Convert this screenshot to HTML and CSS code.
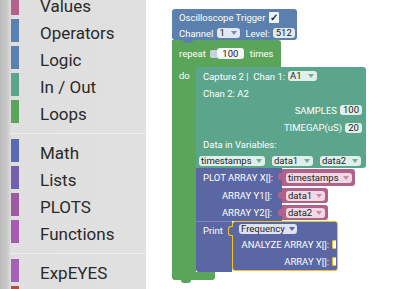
FILE: index.html
```html
<!DOCTYPE html>
<html>
<head>
<meta charset="utf-8">
<link rel="stylesheet" href="styles.css">
</head>
<body>
<div class="app">
  <nav class="toolbox">
    <div class="cats">
      <div class="cat"><span class="sw c-values"></span><span class="lbl">Values</span></div>
      <div class="cat"><span class="sw c-ops"></span><span class="lbl">Operators</span></div>
      <div class="cat"><span class="sw c-logic"></span><span class="lbl">Logic</span></div>
      <div class="cat"><span class="sw c-io"></span><span class="lbl">In / Out</span></div>
      <div class="cat"><span class="sw c-loops"></span><span class="lbl">Loops</span></div>
      <div class="sep"><span class="line"></span></div>
      <div class="cat"><span class="sw c-math"></span><span class="lbl">Math</span></div>
      <div class="cat"><span class="sw c-lists"></span><span class="lbl">Lists</span></div>
      <div class="cat"><span class="sw c-plots"></span><span class="lbl">PLOTS</span></div>
      <div class="cat"><span class="sw c-funcs"></span><span class="lbl">Functions</span></div>
      <div class="sep"><span class="line"></span></div>
      <div class="cat"><span class="sw c-exp"></span><span class="lbl">ExpEYES</span></div>
      <div class="cat"><span class="sw c-more"></span><span class="lbl"></span></div>
    </div>
  </nav>
  <main class="ws">
    <div class="stack">
      <div class="blk trigger">
        <div class="row t1">Oscilloscope Trigger<span class="chk">✓</span></div>
        <div class="row t2">Channel<span class="fld dd w-ch">1<i class="arr"></i></span>Level:<span class="fld w-lv">512</span></div>
      </div>
      <div class="repeat">
        <div class="rhead">repeat<span class="numtab"></span><span class="fld num">100</span>times</div>
        <div class="rmid">
          <div class="spine">do</div>
          <div class="stmts">
            <div class="blk capture">
              <div class="row c1">Capture 2 |&nbsp; Chan 1:<span class="fld dd w-a1">A1<i class="arr"></i></span></div>
              <div class="row c2">Chan 2: A2</div>
              <div class="row c3 end">SAMPLES<span class="fld w-sm">100</span></div>
              <div class="row c4 end">TIMEGAP(uS)<span class="fld w-tg">20</span></div>
              <div class="row c5">Data in Variables:</div>
              <div class="row c6">
                <span class="fld dd w-ts">timestamps<i class="arr"></i></span>
                <span class="fld dd w-d">data1<i class="arr"></i></span>
                <span class="fld dd w-d">data2<i class="arr"></i></span>
              </div>
            </div>
            <div class="plot">
              <div class="blk plot-body">
                <div class="row p1">PLOT ARRAY X[]:</div>
                <div class="row p2 end">ARRAY Y1[]:</div>
                <div class="row p3 end">ARRAY Y2[]:</div>
              </div>
              <div class="plot-ins">
                <div class="slot s1"><div class="val wide"><span class="fld dd">timestamps<i class="arr"></i></span></div></div>
                <div class="slot s2"><div class="val"><span class="fld dd">data1<i class="arr"></i></span></div></div>
                <div class="slot s3"><div class="val"><span class="fld dd">data2<i class="arr"></i></span></div></div>
              </div>
            </div>
            <div class="print">
              <div class="blk print-body">Print</div>
              <div class="blk fval">
                <div class="row f1"><span class="fld dd w-fr">Frequency<i class="arr"></i></span></div>
                <div class="row f2 end">ANALYZE ARRAY X[]:<span class="sock"></span></div>
                <div class="row f3 end">ARRAY Y[]:<span class="sock"></span></div>
              </div>
            </div>
          </div>
        </div>
        <div class="rfoot"></div>
      </div>
    </div>
  </main>
</div>
</body>
</html>
```

FILE: styles.css
```css
* { box-sizing: border-box; margin: 0; padding: 0; }
html, body { width: 413px; height: 289px; overflow: hidden; background: #fff; }
body { font-family: Roboto, "Liberation Sans", sans-serif; }

.app { display: flex; height: 289px; }

/* toolbox */
.toolbox {
  width: 146px; flex: none; overflow: hidden;
  background: linear-gradient(to right, #bcbcbc 0, #c8c8c8 7px, #dfdfdf 11px, #e0e0e0 100%);
}
.cats { margin-top: -8px; }
.cat { display: flex; align-items: flex-start; height: 23px; margin-bottom: 4px; }
.sw { width: 8px; height: 23px; margin-left: 11px; flex: none; }
.lbl { margin-left: 21px; font-size: 17px; line-height: 23px; padding-top: 3px; color: #2a2a2a; white-space: nowrap; }
.sep { height: 12px; display: flex; align-items: center; }
.sep .line { height: 1px; flex: 1; margin-left: 10px; background: #ededed; }

.c-values { background: #b4608c; }
.c-ops { background: #5b80b2; }
.c-logic { background: #5b80b2; }
.c-io { background: #5ba58c; }
.c-loops { background: #5ba55b; }
.c-math { background: #5b69b2; }
.c-lists { background: #7460b0; }
.c-plots { background: #a05aa2; }
.c-funcs { background: #a85ab2; }
.c-exp { background: #a85eb5; }
.c-more { background: #a5524c; }

/* workspace */
.ws { flex: 1; padding: 9px 0 0 26px; }
.stack { display: flex; flex-direction: column; align-items: flex-start; }

.blk { position: relative; color: #fff; font-size: 9.5px; }
.row { display: flex; align-items: center; white-space: nowrap; }
.row.end { justify-content: flex-end; }

.fld {
  display: inline-flex; align-items: center; height: 10px; line-height: 10px;
  padding: 0 2px; border-radius: 3px; color: #1c1c1c; font-size: 9.5px;
  background: rgba(255,255,255,0.82);
}
.dd { justify-content: space-between; padding: 0 3px 0 2px; }
.arr {
  display: inline-block; width: 0; height: 0; margin-left: 4px;
  border-left: 3px solid transparent; border-right: 3px solid transparent;
  border-top: 4px solid currentColor;
}

/* trigger */
.trigger { background: #5b80ad; width: 125px; height: 31px; border-radius: 3px; padding-left: 7px; z-index: 2; }
.trigger::after {
  content: ""; position: absolute; left: 11px; bottom: -3px; width: 10px; height: 3px;
  background: #5b80ad; border-radius: 0 0 3px 3px;
}
.trigger .t1 { height: 17px; }
.trigger .t2 { height: 14px; }
.trigger .arr { color: #6f8fb8; }
.chk {
  width: 10px; height: 11px; margin-left: 4px; background: #eef2f7; color: #1d2a38;
  border-radius: 1px; font-size: 10px; line-height: 11px; text-align: center; font-weight: bold;
}
.w-ch { width: 23px; margin: 0 5px 0 4px; }
.w-lv { width: 22px; margin-left: 3px; justify-content: center; }

/* repeat */
.repeat { display: flex; flex-direction: column; align-items: flex-start; color: #fff; font-size: 9.5px; }
.rhead {
  background: #5ba55b; width: 109px; height: 27px; padding-left: 7px;
  display: flex; align-items: center; white-space: nowrap; border-radius: 0 3px 0 0;
}
.numtab { width: 7px; height: 8px; margin-left: 4px; background: #c9cfe0; border-radius: 2px 0 0 2px; }
.num { width: 27px; height: 11px; background: #f4f6fb; justify-content: center; margin-right: 6px; }
.rmid { display: flex; }
.spine { width: 24px; background: #5ba55b; padding: 2px 0 0 7px; line-height: 14px; }
.stmts { display: flex; flex-direction: column; align-items: flex-start; }
.rfoot { background: #5ba55b; width: 43px; height: 8px; border-radius: 0 0 3px 3px; position: relative; }
.rfoot::after {
  content: ""; position: absolute; left: 9px; bottom: -3px; width: 10px; height: 3px;
  background: #5ba55b; border-radius: 0 0 3px 3px;
}

/* capture */
.capture { background: #5ba58c; width: 170px; padding: 0 4px 0 7px; border-radius: 0 3px 3px 0; }
.capture .arr { color: #77ae9a; }
.capture .c1 { height: 18px; }
.capture .c2 { height: 16px; }
.capture .c3 { height: 18px; }
.capture .c4 { height: 17px; }
.capture .c5 { height: 17px; }
.capture .c6 { height: 15px; margin-left: -4px; gap: 7px; }
.w-a1 { width: 29px; margin-left: 3px; }
.w-sm { width: 22px; margin-left: 3px; justify-content: center; }
.w-tg { width: 17px; margin-left: 3px; justify-content: center; }
.w-ts { width: 66px; }
.w-d { width: 41px; }

/* plot */
.plot { display: flex; }
.plot-body { background: #5b67a5; width: 86px; padding: 0 10px 0 7px; }
.plot-body .p1 { height: 18px; }
.plot-body .p2 { height: 18px; }
.plot-body .p3 { height: 17px; }
.plot-ins { display: flex; flex-direction: column; }
.slot { display: flex; align-items: center; }
.s1 { height: 19px; align-items: flex-start; padding-top: 1px; }
.s2 { height: 17px; }
.s3 { height: 17px; }
.val {
  position: relative; background: #b0628a; height: 15px; width: 46px;
  padding: 0 3px 0 4px; border-radius: 0 3px 3px 0; display: flex; align-items: center;
}
.val.wide { width: 73px; height: 17px; }
.val::before {
  content: ""; position: absolute; left: -4px; top: 4px; width: 4px; height: 7px;
  background: #b0628a; border-radius: 3px 0 0 3px;
}
.val .fld { width: 100%; background: #f1d9e4; }
.val .arr { color: #c98aa8; }

/* print */
.print { display: flex; }
.print-body {
  background: #5b67a5; width: 36px; height: 51px; padding: 2px 0 0 7px; line-height: 14px;
  border-top: 1px solid #7c86ba; border-radius: 0 0 0 3px;
}
.fval {
  background: #5b67a5; width: 106px; height: 50px; border: 1.5px solid #f6c21a;
  border-radius: 3px; padding: 0 1px 0 6px;
}
.fval::before {
  content: ""; position: absolute; left: -5px; top: 4px; width: 4px; height: 8px;
  background: #5b67a5; border: 1.5px solid #f6c21a; border-right: none; border-radius: 3px 0 0 3px;
}
.fval .f1 { height: 14px; }
.fval .f2 { height: 17px; }
.fval .f3 { height: 16px; }
.w-fr { width: 58px; background: #dfe2f1; }
.fval .arr { color: #5b67a5; }
.sock {
  width: 4px; height: 9px; margin-left: 3px; background: #fff;
  border: 1.5px solid #f6c21a; border-right: none; border-radius: 2px 0 0 2px;
}
```
